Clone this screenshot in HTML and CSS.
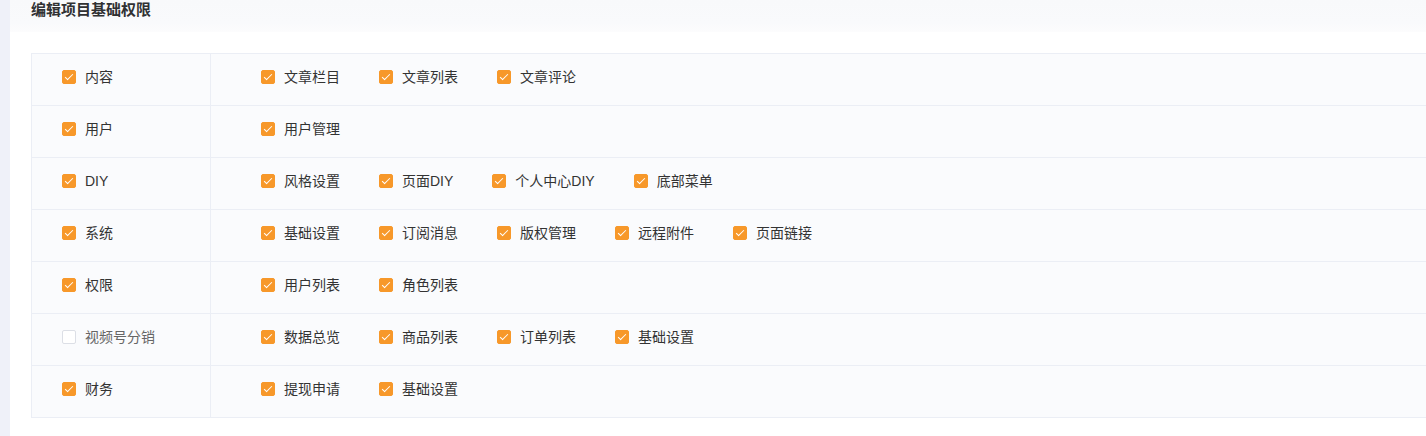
FILE: index.html
```html
<!DOCTYPE html>
<html lang="zh">
<head>
<meta charset="utf-8">
<title>编辑项目基础权限</title>
<link rel="stylesheet" href="styles.css">
</head>
<body>
<div class="page">
  <div class="strip"></div>
  <div class="main">
    <div class="header"><span class="title">编辑项目基础权限</span></div>
    <div class="content">
      <div class="table">
        <div class="row">
          <div class="cell-main"><label class="cb checked"><span class="box"></span><span class="lbl">内容</span></label></div>
          <div class="cell-subs">
            <label class="cb checked"><span class="box"></span><span class="lbl">文章栏目</span></label>
            <label class="cb checked"><span class="box"></span><span class="lbl">文章列表</span></label>
            <label class="cb checked"><span class="box"></span><span class="lbl">文章评论</span></label>
          </div>
        </div>
        <div class="row">
          <div class="cell-main"><label class="cb checked"><span class="box"></span><span class="lbl">用户</span></label></div>
          <div class="cell-subs">
            <label class="cb checked"><span class="box"></span><span class="lbl">用户管理</span></label>
          </div>
        </div>
        <div class="row">
          <div class="cell-main"><label class="cb checked"><span class="box"></span><span class="lbl">DIY</span></label></div>
          <div class="cell-subs">
            <label class="cb checked"><span class="box"></span><span class="lbl">风格设置</span></label>
            <label class="cb checked"><span class="box"></span><span class="lbl">页面DIY</span></label>
            <label class="cb checked"><span class="box"></span><span class="lbl">个人中心DIY</span></label>
            <label class="cb checked"><span class="box"></span><span class="lbl">底部菜单</span></label>
          </div>
        </div>
        <div class="row">
          <div class="cell-main"><label class="cb checked"><span class="box"></span><span class="lbl">系统</span></label></div>
          <div class="cell-subs">
            <label class="cb checked"><span class="box"></span><span class="lbl">基础设置</span></label>
            <label class="cb checked"><span class="box"></span><span class="lbl">订阅消息</span></label>
            <label class="cb checked"><span class="box"></span><span class="lbl">版权管理</span></label>
            <label class="cb checked"><span class="box"></span><span class="lbl">远程附件</span></label>
            <label class="cb checked"><span class="box"></span><span class="lbl">页面链接</span></label>
          </div>
        </div>
        <div class="row">
          <div class="cell-main"><label class="cb checked"><span class="box"></span><span class="lbl">权限</span></label></div>
          <div class="cell-subs">
            <label class="cb checked"><span class="box"></span><span class="lbl">用户列表</span></label>
            <label class="cb checked"><span class="box"></span><span class="lbl">角色列表</span></label>
          </div>
        </div>
        <div class="row">
          <div class="cell-main"><label class="cb"><span class="box"></span><span class="lbl">视频号分销</span></label></div>
          <div class="cell-subs">
            <label class="cb checked"><span class="box"></span><span class="lbl">数据总览</span></label>
            <label class="cb checked"><span class="box"></span><span class="lbl">商品列表</span></label>
            <label class="cb checked"><span class="box"></span><span class="lbl">订单列表</span></label>
            <label class="cb checked"><span class="box"></span><span class="lbl">基础设置</span></label>
          </div>
        </div>
        <div class="row">
          <div class="cell-main"><label class="cb checked"><span class="box"></span><span class="lbl">财务</span></label></div>
          <div class="cell-subs">
            <label class="cb checked"><span class="box"></span><span class="lbl">提现申请</span></label>
            <label class="cb checked"><span class="box"></span><span class="lbl">基础设置</span></label>
          </div>
        </div>
      </div>
    </div>
  </div>
</div>
</body>
</html>
```
FILE: styles.css
```css
* { box-sizing: border-box; }
html, body {
  margin: 0;
  padding: 0;
  width: 1426px;
  height: 436px;
  overflow: hidden;
  background: #ffffff;
  font-family: "Liberation Sans", "Noto Sans CJK SC", sans-serif;
  color: #333333;
}
.page {
  display: flex;
  height: 436px;
}
.strip {
  width: 10px;
  flex: 0 0 10px;
  background: #eff1f9;
}
.main {
  flex: 1;
  min-width: 0;
  background: #ffffff;
}
.header {
  height: 32px;
  padding-left: 21px;
  background: linear-gradient(#f8f9fb, #f9fafc 70%, #fcfcfd);
}
.title {
  display: block;
  font-size: 15px;
  font-weight: 700;
  line-height: 19px;
  color: #303133;
}
.content {
  padding: 21px 0 0 21px;
}
.table {
  width: 1420px;
  border-left: 1px solid #ebeef5;
  border-top: 1px solid #ebeef5;
  background: #fafbfd;
}
.row {
  display: flex;
  height: 52px;
  border-bottom: 1px solid #ebeef5;
}
.cell-main {
  width: 179px;
  flex: 0 0 179px;
  padding-left: 30px;
  padding-bottom: 6px;
  border-right: 1px solid #ebeef5;
  display: flex;
  align-items: center;
}
.cell-subs {
  flex: 1;
  padding-left: 50px;
  padding-bottom: 6px;
  display: flex;
  align-items: center;
}
.cb {
  display: inline-flex;
  align-items: center;
  margin-right: 39px;
  font-size: 14px;
  line-height: 20px;
  color: #333333;
  white-space: nowrap;
}
.box {
  position: relative;
  width: 14px;
  height: 14px;
  border: 1px solid #dcdfe6;
  border-radius: 2px;
  background: #ffffff;
  margin-right: 9px;
}
.cb.checked .box {
  background: #f7982a;
  border-color: #f7982a;
}
.cb.checked .box::after {
  content: "";
  position: absolute;
  left: 4px;
  top: 1px;
  width: 3px;
  height: 7px;
  border: 1px solid #ffffff;
  border-left: 0;
  border-top: 0;
  transform: rotate(45deg);
}
.cb:not(.checked) .lbl {
  color: #666666;
}
```
